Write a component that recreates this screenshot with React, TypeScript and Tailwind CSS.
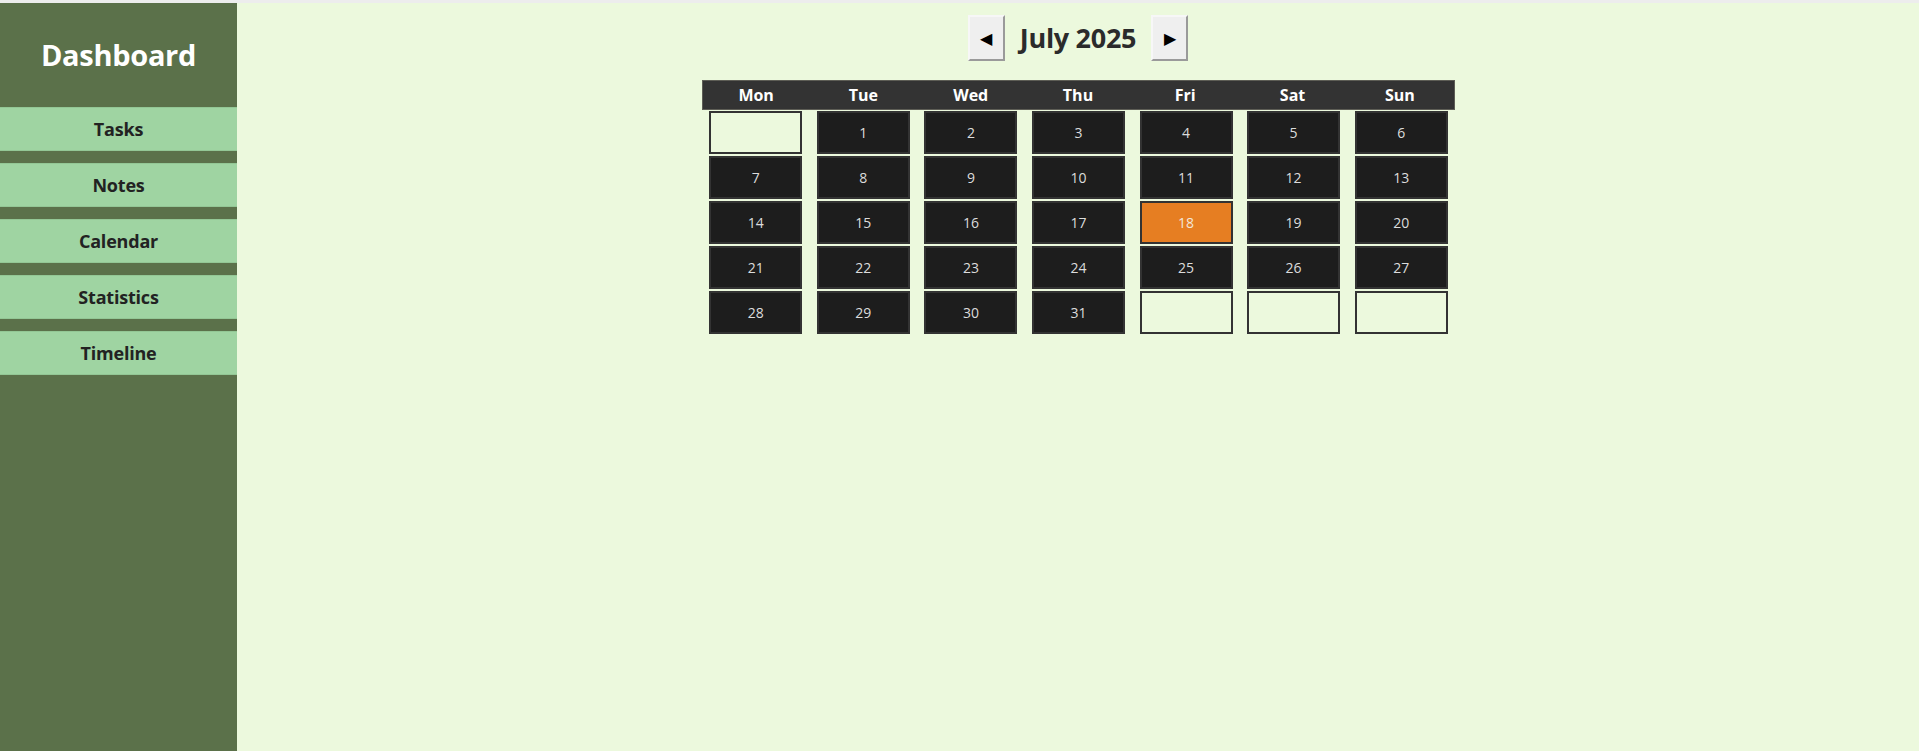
import React from "react";

const navItems = ["Tasks", "Notes", "Calendar", "Statistics", "Timeline"];
const weekDays = ["Mon", "Tue", "Wed", "Thu", "Fri", "Sat", "Sun"];

// July 2025 starts on a Tuesday
const cells: (number | null)[] = [
  null,
  ...Array.from({ length: 31 }, (_, i) => i + 1),
  null,
  null,
  null,
];

export default function App() {
  return (
    <div
      className="h-[751px] w-full overflow-hidden bg-[#ecf9dd] flex flex-col"
      style={{ fontFamily: '"Open Sans", "Noto Sans", sans-serif' }}
    >
      {/* top strip */}
      <div className="h-[3px] bg-[#ededed] shrink-0" />

      <div className="flex flex-1 min-h-0">
        {/* Sidebar */}
        <aside className="w-[237px] shrink-0 bg-[#5b714a] flex flex-col">
          <div className="h-[104px] flex items-center justify-center">
            <h1 className="text-white text-[29px] font-bold tracking-[-0.3px]">
              Dashboard
            </h1>
          </div>
          <nav className="flex flex-col gap-[12px]">
            {navItems.map((item) => (
              <button
                key={item}
                className="h-[44px] w-full bg-[#9fd4a2] border-y border-[#93c795] text-[#222] text-[18px] font-bold tracking-[-0.2px]"
              >
                {item}
              </button>
            ))}
          </nav>
        </aside>

        {/* Main */}
        <main className="flex-1 flex flex-col items-center pt-[12px]">
          <div className="flex items-center">
            <button className="w-[37px] h-[46px] bg-[#efefef] border-2 border-t-[#f7f7f7] border-l-[#f7f7f7] border-r-[#9a9a9a] border-b-[#9a9a9a] text-[16px] text-black flex items-center justify-center">
              ◀
            </button>
            <span className="mx-[15px] text-[27px] font-bold text-[#2b2b2b] tracking-[-0.3px]">
              July 2025
            </span>
            <button className="w-[37px] h-[46px] bg-[#efefef] border-2 border-t-[#f7f7f7] border-l-[#f7f7f7] border-r-[#9a9a9a] border-b-[#9a9a9a] text-[16px] text-black flex items-center justify-center">
              ▶
            </button>
          </div>

          <div className="mt-[19px] w-[753px]">
            <div className="grid grid-cols-7 h-[30px] bg-[#333333] border border-[#5d5d55]">
              {weekDays.map((d) => (
                <div
                  key={d}
                  className="flex items-center justify-center text-white text-[16px] font-bold"
                >
                  {d}
                </div>
              ))}
            </div>
            <div className="grid grid-cols-7 gap-y-[2px] mt-[1px]">
              {cells.map((n, i) => (
                <div key={i} className="flex justify-center pl-[1px]">
                  <div
                    className={`w-[93px] h-[43px] border-2 border-[#333333] flex items-center justify-center text-[14px] ${
                      n === null
                        ? "bg-[#ecf9dd]"
                        : n === 18
                        ? "bg-[#e67e22] text-[#f3e6da]"
                        : "bg-[#1d1d1d] text-[#dcdcdc]"
                    }`}
                  >
                    {n ?? ""}
                  </div>
                </div>
              ))}
            </div>
          </div>
        </main>
      </div>
    </div>
  );
}
